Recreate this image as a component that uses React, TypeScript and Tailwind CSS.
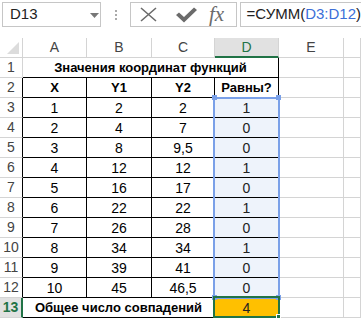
import React from 'react';

const font = '"Liberation Sans", Arial, sans-serif';

const cols = ['A', 'B', 'C', 'D', 'E', ''];
const colWidths = '23px 64px 65px 63px 64px 65px 1fr';

const data: [string, string, string, string][] = [
  ['1', '2', '2', '1'],
  ['2', '4', '7', '0'],
  ['3', '8', '9,5', '0'],
  ['4', '12', '12', '1'],
  ['5', '16', '17', '0'],
  ['6', '22', '22', '1'],
  ['7', '26', '28', '0'],
  ['8', '34', '34', '1'],
  ['9', '39', '41', '0'],
  ['10', '45', '46,5', '0'],
];

function Cell({ children, className = '' }: { children?: React.ReactNode; className?: string }) {
  return (
    <div className={`h-5 flex items-center justify-center border-b border-r text-[14px] leading-none ${className}`}>
      {children}
    </div>
  );
}

function RowHead({ n, black, active }: { n: number; black?: boolean; active?: boolean }) {
  return (
    <div
      className={`h-5 flex items-center justify-center border-b border-b-[#d4d4d4] text-[14px] ${
        active
          ? 'bg-[#e1e1e1] text-[#217346] border-r-2 border-r-[#217346] font-bold'
          : black
            ? 'border-r border-r-black text-[#444]'
            : 'border-r border-r-[#d4d4d4] text-[#444]'
      }`}
    >
      {n}
    </div>
  );
}

function Toolbar() {
  return (
    <div className="h-[38px] flex items-start pt-[2px] bg-white">
      <div className="ml-[2px] w-[102px] h-[25px] border border-[#c6c6c6] flex items-center pl-[7px] relative">
        <span className="text-[15px] text-[#222]">D13</span>
        <svg className="absolute left-[87px] top-[10px]" width="9" height="5" viewBox="0 0 9 5">
          <path d="M0 0 L9 0 L4.5 5 Z" fill="#777" />
        </svg>
      </div>
      <div className="w-[30px] h-[25px] flex flex-col items-center justify-center gap-[2px]">
        <span className="w-[2px] h-[2px] bg-[#aaa]" />
        <span className="w-[2px] h-[2px] bg-[#aaa]" />
        <span className="w-[2px] h-[2px] bg-[#aaa]" />
      </div>
      <div className="w-[110px] h-[25px] border border-[#c6c6c6] flex items-center">
        <svg className="ml-[9px]" width="17" height="15" viewBox="0 0 17 15">
          <path d="M1 1 L16 14 M16 1 L1 14" stroke="#6b6b6b" strokeWidth="1.6" fill="none" />
        </svg>
        <svg className="ml-[19px]" width="21" height="16" viewBox="0 0 21 16">
          <path d="M0 8 L3 5.5 L8 10 L18 0.5 L21 3 L8 15.5 Z" fill="#6b6b6b" />
        </svg>
        <span
          className="ml-[12px] text-[21px] italic text-[#6b6b6b] leading-none"
          style={{ fontFamily: '"Liberation Serif", "Times New Roman", serif' }}
        >
          fx
        </span>
      </div>
      <div className="ml-[3px] flex-1 h-[25px] border border-r-0 border-[#c6c6c6] flex items-center pl-[6px] text-[15px] text-[#222]">
        =СУММ(<span className="text-[#3c6fd8]">D3:D12</span>)
      </div>
    </div>
  );
}

export default function App() {
  const black = 'border-b-black border-r-black';
  const gray = 'border-b-[#d4d4d4] border-r-[#d4d4d4]';
  return (
    <div className="w-[361px] h-[319px] bg-white overflow-hidden text-black" style={{ fontFamily: font }}>
      <Toolbar />
      <div className="relative grid" style={{ gridTemplateColumns: colWidths }}>
        {/* header row */}
        <div className="h-5 border-b border-r border-[#d4d4d4] relative">
          <svg className="absolute right-[3px] bottom-[3px]" width="12" height="12" viewBox="0 0 12 12">
            <path d="M12 0 L12 12 L0 12 Z" fill="#dcdcdc" />
          </svg>
        </div>
        {cols.map((c, i) =>
          c === 'D' ? (
            <div
              key={i}
              className="h-5 flex items-center justify-center bg-[#e1e1e1] border-b-2 border-b-[#217346] border-r border-r-[#d4d4d4] text-[14px] text-[#217346]"
            >
              {c}
            </div>
          ) : (
            <div
              key={i}
              className="h-5 flex items-center justify-center border-b border-r border-[#d4d4d4] text-[14px] text-[#444]"
            >
              {c}
            </div>
          )
        )}

        {/* row 1 */}
        <RowHead n={1} />
        <div className={`col-span-4 h-5 flex items-center justify-center border-b border-r font-bold text-[13px] ${black}`}>
          Значения координат функций
        </div>
        <Cell className={gray} />
        <Cell className={gray} />

        {/* row 2 */}
        <RowHead n={2} black />
        <Cell className={`${black} font-bold !text-[13px]`}>X</Cell>
        <Cell className={`${black} font-bold !text-[13px]`}>Y1</Cell>
        <Cell className={`${black} font-bold !text-[13px]`}>Y2</Cell>
        <Cell className={`${black} font-bold !text-[13px]`}>Равны?</Cell>
        <Cell className={gray} />
        <Cell className={gray} />

        {data.map((r, i) => (
          <React.Fragment key={i}>
            <RowHead n={i + 3} black />
            <Cell className={black}>{r[0]}</Cell>
            <Cell className={black}>{r[1]}</Cell>
            <Cell className={black}>{r[2]}</Cell>
            <Cell className={`${black} bg-[#eef3fb] text-[#222]`}>{r[3]}</Cell>
            <Cell className={gray} />
            <Cell className={gray} />
          </React.Fragment>
        ))}

        {/* row 13 */}
        <RowHead n={13} active />
        <div className={`col-span-3 h-5 flex items-center justify-center border-b border-r font-bold text-[13px] ${black}`}>
          Общее число совпадений
        </div>
        <Cell className={`${black} bg-[#ffc000] text-[#222]`}>4</Cell>
        <Cell className={gray} />
        <Cell className={gray} />

        {/* selection D3:D12 */}
        <div className="absolute left-[213px] top-[59px] w-[67px] h-[202px] border-2 border-[#7aa0e8] pointer-events-none" />
        <span className="absolute left-[212px] top-[57px] w-[5px] h-[5px] bg-[#7aa0e8]" />
        <span className="absolute left-[276px] top-[57px] w-[5px] h-[5px] bg-[#7aa0e8]" />
        <span className="absolute left-[212px] top-[257px] w-[5px] h-[5px] bg-[#7aa0e8]" />
        <span className="absolute left-[276px] top-[257px] w-[5px] h-[5px] bg-[#7aa0e8]" />

        {/* active cell D13 */}
        <div className="absolute left-[213px] top-[258px] w-[67px] h-[22px] border-2 border-[#217346] pointer-events-none" />
        <span className="absolute left-[276px] top-[276px] w-[5px] h-[5px] bg-[#217346] border border-white" />
      </div>
    </div>
  );
}
